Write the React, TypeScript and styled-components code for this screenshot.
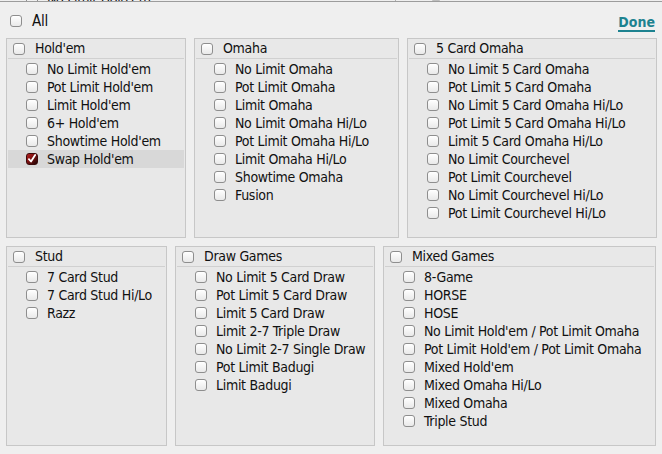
import React from "react";
import styled, { createGlobalStyle } from "styled-components";

const Global = createGlobalStyle`
  html, body { margin: 0; padding: 0; background: #efefef; }
  body {
    font-family: "DejaVu Sans Condensed", "DejaVu Sans", sans-serif;
    font-size: 14px;
    letter-spacing: -0.3px;
    color: #111;
    width: 662px;
    height: 454px;
    overflow: hidden;
  }
`;

const Page = styled.div`
  width: 662px;
  height: 454px;
  background: #efefef;
  display: flex;
  flex-direction: column;
`;

const TopStrip = styled.div`
  height: 3px;
  border-bottom: 1px solid #9c9c9c;
  overflow: hidden;
  display: flex;
`;

const StripPane = styled.div<{ $w?: number }>`
  width: ${(p) => (p.$w ? `${p.$w}px` : "auto")};
  flex: ${(p) => (p.$w ? "none" : "1")};
  border-right: ${(p) => (p.$w ? "1px solid #b0b0b0" : "none")};
  display: flex;
  align-items: center;
  gap: 9px;
  padding-left: 26px;
  margin-top: -10px;
  height: 18px;
  line-height: 18px;
`;

const HeaderRow = styled.div`
  display: flex;
  align-items: center;
  justify-content: space-between;
  padding: 10px 7px 0 10px;
  height: 27px;
  box-sizing: border-box;
  margin-bottom: 9px;
`;

const AllLabel = styled.label`
  display: flex;
  align-items: center;
  gap: 10px;
  font-size: 15px;
`;

const Done = styled.a`
  color: #1d8290;
  font-weight: bold;
  font-size: 14px;
  text-decoration: none;
  border-bottom: 2px solid #1d8290;
  line-height: 14px;
  padding-bottom: 1px;
  margin-top: 5px;
  letter-spacing: 0;
`;

const PanelRow = styled.div`
  display: flex;
  padding-left: 6px;
  gap: 8px;
  margin-bottom: 8px;
`;

const Panel = styled.div<{ $w: number }>`
  width: ${(p) => p.$w}px;
  height: 200px;
  box-sizing: border-box;
  border: 1px solid #c7c7c7;
  background: #e8e8e8;
  display: flex;
  flex-direction: column;
`;

const PanelHeader = styled.div`
  display: flex;
  align-items: center;
  gap: 10px;
  height: 19px;
  padding-left: 5px;
  margin: 0 1px;
  border-bottom: 1px solid #d0d0d0;
  line-height: 19px;
`;

const ItemList = styled.div`
  padding-top: 1px;
  display: flex;
  flex-direction: column;
`;

const Item = styled.div<{ $selected?: boolean }>`
  display: flex;
  align-items: center;
  gap: 9px;
  height: 18px;
  line-height: 18px;
  margin: 0 1px;
  padding-left: 18px;
  background: ${(p) => (p.$selected ? "#d8d8d8" : "transparent")};
  white-space: nowrap;
`;

const Box = styled.span<{ $checked?: boolean }>`
  flex: none;
  width: 12px;
  height: 12px;
  box-sizing: border-box;
  border-radius: 3px;
  border: 1px solid ${(p) => (p.$checked ? "#3a0a0a" : "#8e8e8e")};
  background: ${(p) =>
    p.$checked
      ? "linear-gradient(135deg, #b52020 0%, #7a1010 45%, #1e0505 100%)"
      : "linear-gradient(#ffffff, #e9e9e9)"};
  display: inline-flex;
  align-items: center;
  justify-content: center;
  box-shadow: ${(p) => (p.$checked ? "none" : "inset 0 1px 0 #fff")};
`;

const Check = ({ checked }: { checked?: boolean }) => (
  <Box $checked={checked}>
    {checked && (
      <svg width="12" height="12" viewBox="0 0 12 12">
        <path
          d="M2.3 6.2 L4.8 9 L9.8 1.2"
          fill="none"
          stroke="#fff"
          strokeWidth="2.2"
          strokeLinecap="round"
          strokeLinejoin="round"
        />
      </svg>
    )}
  </Box>
);

const Triangle = styled.span`
  width: 0;
  height: 0;
  margin-left: 8px;
  border-left: 6px solid transparent;
  border-right: 6px solid transparent;
  border-bottom: 12px solid #bdbdbd;
`;

type Group = { title: string; width: number; items: string[]; selected?: string };

const row1: Group[] = [
  {
    title: "Hold'em",
    width: 180,
    items: [
      "No Limit Hold'em",
      "Pot Limit Hold'em",
      "Limit Hold'em",
      "6+ Hold'em",
      "Showtime Hold'em",
      "Swap Hold'em",
    ],
    selected: "Swap Hold'em",
  },
  {
    title: "Omaha",
    width: 205,
    items: [
      "No Limit Omaha",
      "Pot Limit Omaha",
      "Limit Omaha",
      "No Limit Omaha Hi/Lo",
      "Pot Limit Omaha Hi/Lo",
      "Limit Omaha Hi/Lo",
      "Showtime Omaha",
      "Fusion",
    ],
  },
  {
    title: "5 Card Omaha",
    width: 250,
    items: [
      "No Limit 5 Card Omaha",
      "Pot Limit 5 Card Omaha",
      "No Limit 5 Card Omaha Hi/Lo",
      "Pot Limit 5 Card Omaha Hi/Lo",
      "Limit 5 Card Omaha Hi/Lo",
      "No Limit Courchevel",
      "Pot Limit Courchevel",
      "No Limit Courchevel Hi/Lo",
      "Pot Limit Courchevel Hi/Lo",
    ],
  },
];

const row2: Group[] = [
  { title: "Stud", width: 161, items: ["7 Card Stud", "7 Card Stud Hi/Lo", "Razz"] },
  {
    title: "Draw Games",
    width: 200,
    items: [
      "No Limit 5 Card Draw",
      "Pot Limit 5 Card Draw",
      "Limit 5 Card Draw",
      "Limit 2-7 Triple Draw",
      "No Limit 2-7 Single Draw",
      "Pot Limit Badugi",
      "Limit Badugi",
    ],
  },
  {
    title: "Mixed Games",
    width: 273,
    items: [
      "8-Game",
      "HORSE",
      "HOSE",
      "No Limit Hold'em / Pot Limit Omaha",
      "Pot Limit Hold'em / Pot Limit Omaha",
      "Mixed Hold'em",
      "Mixed Omaha Hi/Lo",
      "Mixed Omaha",
      "Triple Stud",
    ],
  },
];

const GroupPanel = ({ g }: { g: Group }) => (
  <Panel $w={g.width}>
    <PanelHeader>
      <Check />
      <span>{g.title}</span>
    </PanelHeader>
    <ItemList>
      {g.items.map((it) => (
        <Item key={it} $selected={it === g.selected}>
          <Check checked={it === g.selected} />
          <span>{it}</span>
        </Item>
      ))}
    </ItemList>
  </Panel>
);

export default function App() {
  return (
    <Page>
      <Global />
      <TopStrip>
        <StripPane $w={369}>
          <Check />
          <span>No Limit Hold'em</span>
        </StripPane>
        <StripPane>
          <Triangle />
        </StripPane>
      </TopStrip>
      <HeaderRow>
        <AllLabel>
          <Check />
          <span>All</span>
        </AllLabel>
        <Done href="#">Done</Done>
      </HeaderRow>
      <PanelRow>
        {row1.map((g) => (
          <GroupPanel key={g.title} g={g} />
        ))}
      </PanelRow>
      <PanelRow>
        {row2.map((g) => (
          <GroupPanel key={g.title} g={g} />
        ))}
      </PanelRow>
    </Page>
  );
}
